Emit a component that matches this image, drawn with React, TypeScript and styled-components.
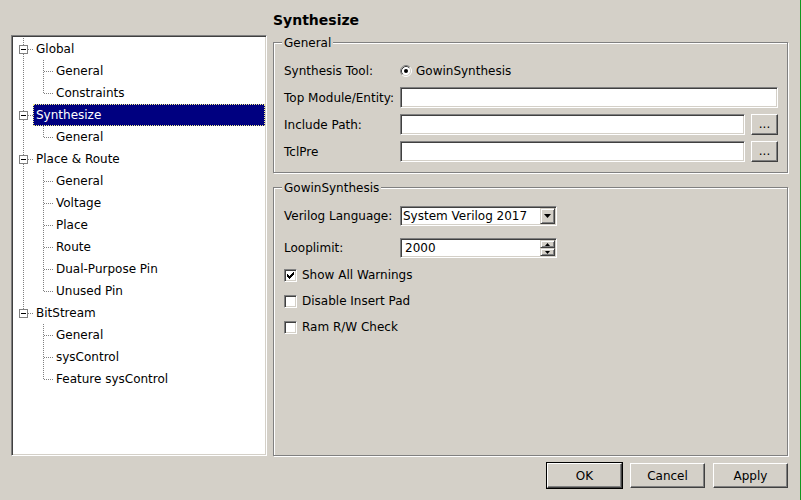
import { Fragment } from 'react'
import styled, { createGlobalStyle, css } from 'styled-components'

const GlobalStyle = createGlobalStyle`
  * { box-sizing: border-box; }
  html, body {
    margin: 0;
    padding: 0;
    background: #d4d0c8;
  }
  body {
    font-family: "DejaVu Sans", "Liberation Sans", sans-serif;
    font-size: 12px;
    color: #000;
  }
`

const sunken = css`
  border: 1px solid;
  border-color: #808080 #fff #fff #808080;
  box-shadow: inset 1px 1px 0 #404040, inset -1px -1px 0 #d4d0c8;
  background: #fff;
`

const raised = css`
  border: 1px solid;
  border-color: #fff #404040 #404040 #fff;
  box-shadow: inset -1px -1px 0 #808080;
  background: #d4d0c8;
`

const Window = styled.div`
  width: 801px;
  height: 500px;
  padding: 0 12px 0 11px;
  border-right: 1px solid #14961e;
  display: flex;
  flex-direction: column;
`

const Main = styled.div`
  display: grid;
  grid-template-columns: 256px 1fr;
  column-gap: 6px;
`

const TreePanel = styled.div`
  ${sunken};
  margin-top: 35px;
  height: 421px;
  padding: 2px 1px 1px;
  overflow: hidden;
`

const TreeRow = styled.div`
  display: flex;
  height: 22px;
`

const Branch = styled.svg`
  flex: none;
  display: block;
`

const TreeLabel = styled.div<{ $selected?: boolean }>`
  flex: 1;
  padding-left: 3px;
  line-height: 22px;
  white-space: nowrap;
  ${({ $selected }) =>
    $selected &&
    css`
      background: #000080;
      color: #fff;
      outline: 1px dotted #f4f08a;
      outline-offset: -1px;
    `}
`

const RightColumn = styled.div`
  display: flex;
  flex-direction: column;
`

const PageTitle = styled.div`
  padding-top: 11px;
  font-size: 14px;
  font-weight: bold;
  line-height: 18px;
`

const GroupBox = styled.div<{ $gap: number; $top: number; $grow?: boolean }>`
  position: relative;
  margin-top: ${({ $gap }) => $gap}px;
  border: 1px solid #808080;
  box-shadow: 1px 1px 0 #fff, inset 1px 1px 0 #fff;
  padding: ${({ $top }) => $top}px 9px 10px 10px;
  ${({ $grow }) => $grow && 'flex: 1;'}
`

const GroupTitle = styled.span`
  position: absolute;
  top: -7px;
  left: 8px;
  padding: 0 2px;
  line-height: 14px;
  background: #d4d0c8;
`

const FormGrid = styled.div`
  display: grid;
  grid-template-columns: 116px 1fr 33px;
  grid-auto-rows: 21px;
  row-gap: 6px;
  align-items: center;
`

const Label = styled.span`
  grid-column: 1;
  white-space: nowrap;
`

const RadioChoice = styled.label`
  grid-column: 2 / 4;
  display: flex;
  align-items: center;
  gap: 4px;
`

const TextField = styled.div<{ $wide?: boolean }>`
  ${sunken};
  height: 21px;
  grid-column: ${({ $wide }) => ($wide ? '2 / 4' : '2')};
`

const BrowseButton = styled.button`
  ${raised};
  grid-column: 3;
  justify-self: end;
  width: 27px;
  height: 21px;
  padding: 0;
  font: inherit;
  line-height: 19px;
  color: #000;
`

const OptionsGrid = styled.div`
  display: grid;
  grid-template-columns: 116px auto;
  grid-auto-rows: 20px;
  row-gap: 12px;
  align-items: center;
`

const Combo = styled.div`
  ${sunken};
  width: 157px;
  height: 20px;
  padding: 1px;
  display: flex;
  align-items: stretch;
`

const FieldText = styled.span<{ $indent: number }>`
  flex: 1;
  padding-left: ${({ $indent }) => $indent}px;
  line-height: 17px;
  white-space: nowrap;
`

const ArrowButton = styled.span<{ $h: number }>`
  width: 15px;
  height: ${({ $h }) => $h}px;
  border: 1px solid;
  border-color: #d4d0c8 #404040 #404040 #d4d0c8;
  box-shadow: inset 1px 1px 0 #fff, inset -1px -1px 0 #808080;
  background: #d4d0c8;
  display: flex;
  align-items: center;
  justify-content: center;
`

const SpinButtons = styled.span`
  display: flex;
  flex-direction: column;
`

const CheckList = styled.div`
  margin-top: 7px;
  display: flex;
  flex-direction: column;
  gap: 6px;
`

const CheckRow = styled.label`
  height: 20px;
  display: flex;
  align-items: center;
  gap: 5px;
`

const CheckBox = styled.span`
  ${sunken};
  width: 13px;
  height: 13px;
  display: flex;
  align-items: center;
  justify-content: center;
`

const DialogButtons = styled.div`
  display: flex;
  justify-content: flex-end;
  gap: 8px;
  margin-top: 7px;
`

const PushButton = styled.button<{ $default?: boolean }>`
  ${raised};
  width: 75px;
  height: 25px;
  padding: 0;
  font: inherit;
  color: #000;
  ${({ $default }) => $default && 'outline: 1px solid #000;'}
`

const DOTS = { stroke: '#808080', strokeDasharray: '1 1', shapeRendering: 'crispEdges' as const }

function RootBranch({ last }: { last: boolean }) {
  return (
    <Branch width={20} height={22}>
      <line x1={10.5} y1={0} x2={10.5} y2={last ? 11 : 22} {...DOTS} />
      <line x1={15} y1={11.5} x2={20} y2={11.5} {...DOTS} />
      <rect x={6.5} y={7.5} width={8} height={8} fill="#fff" stroke="#808080" shapeRendering="crispEdges" />
      <line x1={8} y1={11.5} x2={13} y2={11.5} stroke="#000" shapeRendering="crispEdges" />
    </Branch>
  )
}

function PassBranch({ show }: { show: boolean }) {
  return (
    <Branch width={20} height={22}>
      {show && <line x1={10.5} y1={0} x2={10.5} y2={22} {...DOTS} />}
    </Branch>
  )
}

function ChildBranch({ last }: { last: boolean }) {
  return (
    <Branch width={20} height={22}>
      <line x1={10.5} y1={0} x2={10.5} y2={last ? 12 : 22} {...DOTS} />
      <line x1={11} y1={11.5} x2={20} y2={11.5} {...DOTS} />
    </Branch>
  )
}

function Radio() {
  return (
    <svg width={12} height={12} viewBox="0 0 12 12">
      <circle cx={6} cy={6} r={4.5} fill="#fff" />
      <path d="M9.89 2.11 A5.5 5.5 0 0 0 2.11 9.89" stroke="#808080" fill="none" />
      <path d="M2.11 9.89 A5.5 5.5 0 0 0 9.89 2.11" stroke="#fff" fill="none" />
      <path d="M9.18 2.82 A4.5 4.5 0 0 0 2.82 9.18" stroke="#404040" fill="none" />
      <path d="M2.82 9.18 A4.5 4.5 0 0 0 9.18 2.82" stroke="#d4d0c8" fill="none" />
      <circle cx={6} cy={6} r={2} fill="#000" />
    </svg>
  )
}

function CheckMark() {
  return (
    <svg width={7} height={7} viewBox="0 0 7 7">
      <path
        d="M0 2H1V3H2V4H3V3H4V2H5V1H6V0H7V3H6V4H5V5H4V6H3V7H2V6H1V5H0Z"
        fill="#000"
        shapeRendering="crispEdges"
      />
    </svg>
  )
}

function Arrow({ up, w, h }: { up?: boolean; w: number; h: number }) {
  return (
    <svg width={w} height={h} viewBox={`0 0 ${w} ${h}`}>
      <polygon points={up ? `0,${h} ${w},${h} ${w / 2},0` : `0,0 ${w},0 ${w / 2},${h}`} fill="#000" />
    </svg>
  )
}

const TREE = [
  { label: 'Global', children: ['General', 'Constraints'] },
  { label: 'Synthesize', selected: true, children: ['General'] },
  {
    label: 'Place & Route',
    children: ['General', 'Voltage', 'Place', 'Route', 'Dual-Purpose Pin', 'Unused Pin'],
  },
  { label: 'BitStream', children: ['General', 'sysControl', 'Feature sysControl'] },
]

const CHECKS = [
  { label: 'Show All Warnings', checked: true },
  { label: 'Disable Insert Pad', checked: false },
  { label: 'Ram R/W Check', checked: false },
]

export default function App() {
  return (
    <>
      <GlobalStyle />
      <Window>
        <Main>
          <TreePanel>
            {TREE.map((node, i) => {
              const lastRoot = i === TREE.length - 1
              return (
                <Fragment key={node.label}>
                  <TreeRow>
                    <RootBranch last={lastRoot} />
                    <TreeLabel $selected={node.selected}>{node.label}</TreeLabel>
                  </TreeRow>
                  {node.children.map((child, j) => (
                    <TreeRow key={child}>
                      <PassBranch show={!lastRoot} />
                      <ChildBranch last={j === node.children.length - 1} />
                      <TreeLabel>{child}</TreeLabel>
                    </TreeRow>
                  ))}
                </Fragment>
              )
            })}
          </TreePanel>

          <RightColumn>
            <PageTitle>Synthesize</PageTitle>

            <GroupBox $gap={13} $top={17}>
              <GroupTitle>General</GroupTitle>
              <FormGrid>
                <Label>Synthesis Tool:</Label>
                <RadioChoice>
                  <Radio />
                  GowinSynthesis
                </RadioChoice>
                <Label>Top Module/Entity:</Label>
                <TextField $wide />
                <Label>Include Path:</Label>
                <TextField />
                <BrowseButton>...</BrowseButton>
                <Label>TclPre</Label>
                <TextField />
                <BrowseButton>...</BrowseButton>
              </FormGrid>
            </GroupBox>

            <GroupBox $gap={14} $top={18} $grow>
              <GroupTitle>GowinSynthesis</GroupTitle>
              <OptionsGrid>
                <Label>Verilog Language:</Label>
                <Combo>
                  <FieldText $indent={1}>System Verilog 2017</FieldText>
                  <ArrowButton $h={16}>
                    <Arrow w={7} h={4} />
                  </ArrowButton>
                </Combo>
                <Label>Looplimit:</Label>
                <Combo>
                  <FieldText $indent={3}>2000</FieldText>
                  <SpinButtons>
                    <ArrowButton $h={8}>
                      <Arrow up w={5} h={3} />
                    </ArrowButton>
                    <ArrowButton $h={8}>
                      <Arrow w={5} h={3} />
                    </ArrowButton>
                  </SpinButtons>
                </Combo>
              </OptionsGrid>
              <CheckList>
                {CHECKS.map((c) => (
                  <CheckRow key={c.label}>
                    <CheckBox>{c.checked && <CheckMark />}</CheckBox>
                    {c.label}
                  </CheckRow>
                ))}
              </CheckList>
            </GroupBox>
          </RightColumn>
        </Main>

        <DialogButtons>
          <PushButton $default>OK</PushButton>
          <PushButton>Cancel</PushButton>
          <PushButton>Apply</PushButton>
        </DialogButtons>
      </Window>
    </>
  )
}
